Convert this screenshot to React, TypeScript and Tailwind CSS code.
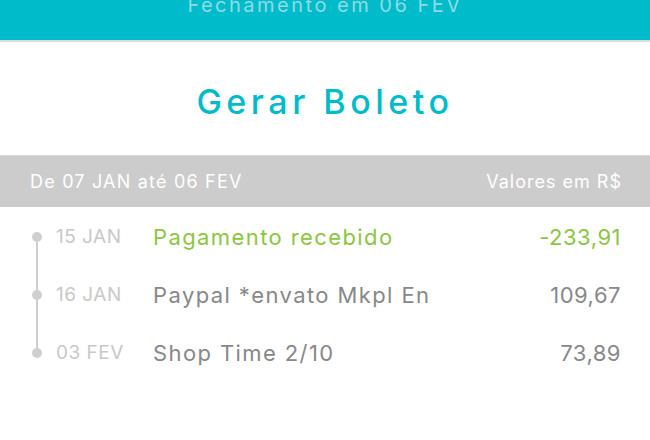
const rows = [
  { date: "15 JAN", desc: "Pagamento recebido", value: "-233,91", credit: true },
  { date: "16 JAN", desc: "Paypal *envato Mkpl En", value: "109,67", credit: false },
  { date: "03 FEV", desc: "Shop Time 2/10", value: "73,89", credit: false },
];

export default function App() {
  return (
    <main className="h-[440px] w-[650px] overflow-hidden bg-white font-['Inter',sans-serif]">
      {/* Header */}
      <header className="h-[42px] overflow-hidden border-b-2 border-[#dcdcdc] bg-[#00bcca]">
        <p className="-mt-[6px] text-center text-[20px] leading-[22px] tracking-[2.5px] text-[#8fdbe3]">
          Fechamento em 06 FEV
        </p>
      </header>

      {/* Title */}
      <section className="flex h-[113px] items-center justify-center pt-[6px]">
        <h1 className="text-[34px] font-medium tracking-[4.5px] text-[#00bcca]">Gerar Boleto</h1>
      </section>

      {/* Period bar */}
      <div className="flex h-[52px] items-center justify-between border-t border-[#dadada] bg-[#cccccc] pl-[30px] pr-[28px] text-[18px] text-white">
        <span className="tracking-[1.2px]">De 07 JAN até 06 FEV</span>
        <span className="tracking-[1px]">Valores em R$</span>
      </div>

      {/* Transactions */}
      <ul className="pt-px">
        {rows.map((row, i) => (
          <li key={row.date} className="flex h-[58px] items-center">
            <div className="ml-[32px] flex h-full w-[10px] flex-col items-center">
              <div className={`w-[2px] flex-1 ${i === 0 ? "" : "bg-[#cfcfcf]"}`} />
              <div className="h-[10px] w-[10px] rounded-full bg-[#cfcfcf]" />
              <div className={`w-[2px] flex-1 ${i === rows.length - 1 ? "" : "bg-[#cfcfcf]"}`} />
            </div>
            <span className="ml-[14px] w-[97px] text-[19px] tracking-[0.5px] text-[#c8c8c8]">{row.date}</span>
            <span className={`flex-1 text-[22px] tracking-[1.4px] ${row.credit ? "text-[#8cc63f]" : "text-[#888888]"}`}>
              {row.desc}
            </span>
            <span className={`pr-[29px] text-[22px] tracking-[0.5px] ${row.credit ? "text-[#8cc63f]" : "text-[#888888]"}`}>
              {row.value}
            </span>
          </li>
        ))}
      </ul>
    </main>
  );
}
